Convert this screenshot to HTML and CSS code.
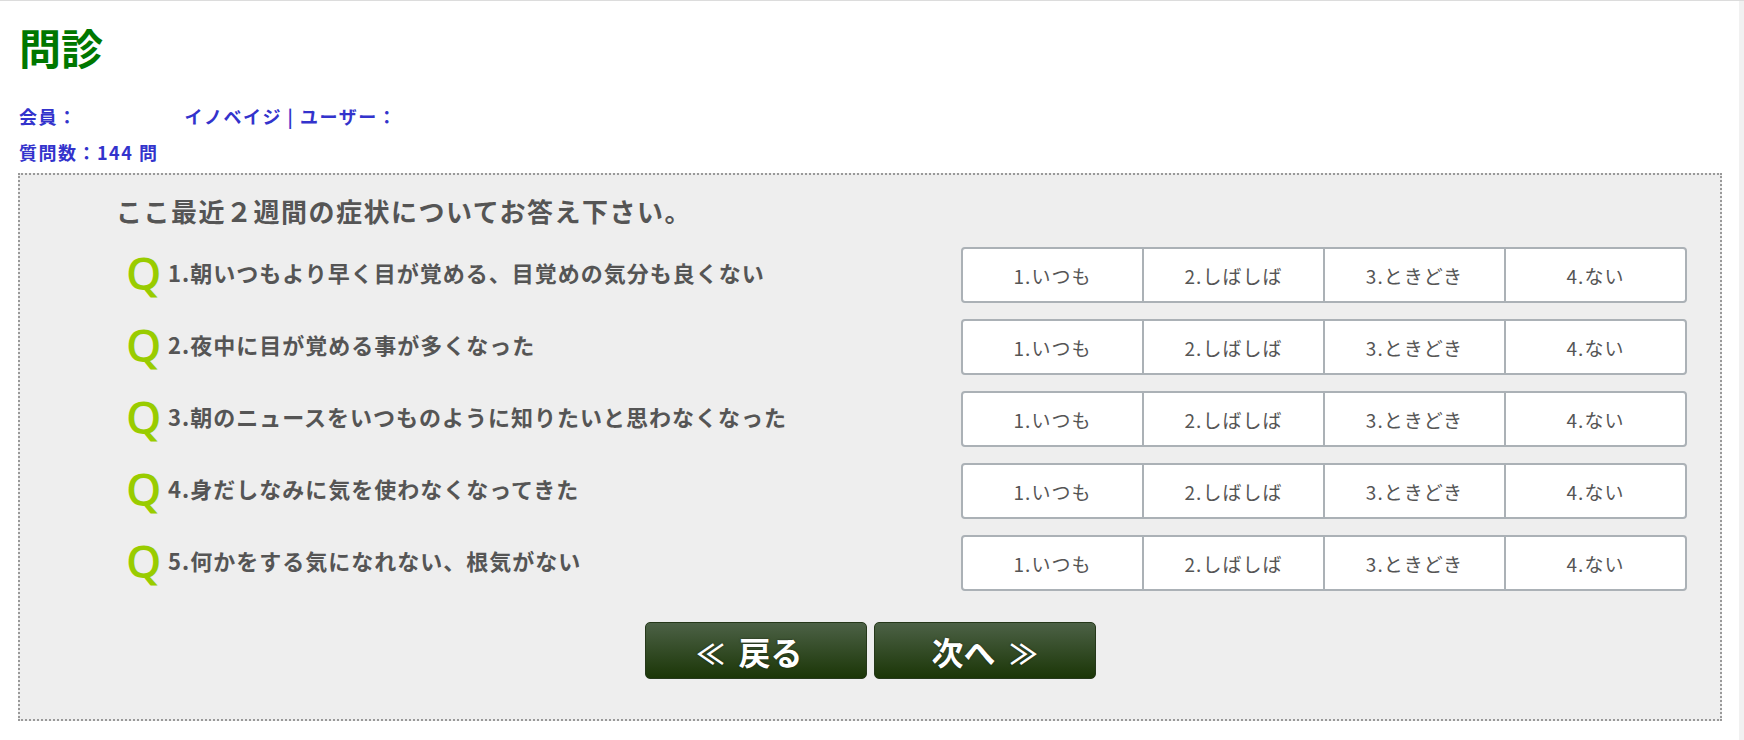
FILE: index.html
```html
<!DOCTYPE html>
<html lang="ja">
<head>
<meta charset="utf-8">
<title>問診</title>
<link rel="stylesheet" href="styles.css">
</head>
<body>
<div class="page">
  <h1 class="title">問診</h1>
  <p class="meta">会員：<span class="member">イノベイジ | ユーザー：</span></p>
  <p class="meta meta2">質問数：144 問</p>
  <div class="box">
    <h2 class="lead">ここ最近２週間の症状についてお答え下さい。</h2>
    <div class="rows">
      <div class="row">
        <div class="question"><span class="q">Q</span><span class="qtext">1.朝いつもより早く目が覚める、目覚めの気分も良くない</span></div>
        <div class="options"><span class="opt">1.いつも</span><span class="opt">2.しばしば</span><span class="opt">3.ときどき</span><span class="opt">4.ない</span></div>
      </div>
      <div class="row">
        <div class="question"><span class="q">Q</span><span class="qtext">2.夜中に目が覚める事が多くなった</span></div>
        <div class="options"><span class="opt">1.いつも</span><span class="opt">2.しばしば</span><span class="opt">3.ときどき</span><span class="opt">4.ない</span></div>
      </div>
      <div class="row">
        <div class="question"><span class="q">Q</span><span class="qtext">3.朝のニュースをいつものように知りたいと思わなくなった</span></div>
        <div class="options"><span class="opt">1.いつも</span><span class="opt">2.しばしば</span><span class="opt">3.ときどき</span><span class="opt">4.ない</span></div>
      </div>
      <div class="row">
        <div class="question"><span class="q">Q</span><span class="qtext">4.身だしなみに気を使わなくなってきた</span></div>
        <div class="options"><span class="opt">1.いつも</span><span class="opt">2.しばしば</span><span class="opt">3.ときどき</span><span class="opt">4.ない</span></div>
      </div>
      <div class="row">
        <div class="question"><span class="q">Q</span><span class="qtext">5.何かをする気になれない、根気がない</span></div>
        <div class="options"><span class="opt">1.いつも</span><span class="opt">2.しばしば</span><span class="opt">3.ときどき</span><span class="opt">4.ない</span></div>
      </div>
    </div>
    <div class="nav">
      <button class="btn btn-back" type="button"><span class="arr arr-l">≪</span>戻る</button>
      <button class="btn" type="button">次へ<span class="arr arr-r">≫</span></button>
    </div>
  </div>
</div>
<div class="scrollbar"></div>
</body>
</html>
```
FILE: styles.css
```css
html, body {
  margin: 0;
  padding: 0;
  height: 100%;
}
body {
  display: flex;
  border-top: 1px solid #dcdcdc;
  box-sizing: border-box;
  background: #ffffff;
  font-family: "Noto Sans CJK JP", "Noto Sans", sans-serif;
  color: #555555;
}
.page {
  flex: 1;
  padding: 0 17px 0 18px;
  min-width: 0;
}
.scrollbar {
  width: 5px;
  background: #f1f1f1;
  flex: none;
}
.title {
  margin: 21px 0 0 0;
  font-size: 42px;
  line-height: 50px;
  font-weight: bold;
  color: #007700;
  padding-left: 1px;
}
.meta {
  margin: 34px 0 0 0;
  padding-left: 1px;
  font-size: 18px;
  line-height: 20px;
  letter-spacing: 1.5px;
  font-weight: bold;
  color: #3333cc;
}
.meta2 {
  margin-top: 16px;
}
.member {
  margin-left: 107px;
}
.box {
  margin-top: 11px;
  border: 2px dotted #999999;
  background: #eeeeee;
  padding: 18px 33px 40px 96px;
}
.lead {
  margin: 0;
  font-size: 26px;
  line-height: 36px;
  letter-spacing: 1.5px;
  font-weight: bold;
  color: #555555;
}
.rows {
  margin-top: 18px;
  display: flex;
  flex-direction: column;
  gap: 16px;
  padding-left: 10px;
}
.row {
  display: flex;
  align-items: center;
  justify-content: space-between;
}
.question {
  display: flex;
  align-items: center;
  margin-top: -6px;
}
.q {
  font-family: "Open Sans", "DejaVu Sans", sans-serif;
  font-weight: 600;
  font-size: 45px;
  line-height: 46px;
  color: #99cc00;
  width: 42px;
  margin-top: 2px;
}
.qtext {
  font-size: 22px;
  line-height: 30px;
  letter-spacing: 1px;
  font-weight: bold;
  color: #555555;
}
.options {
  width: 726px;
  height: 56px;
  box-sizing: border-box;
  display: flex;
  border: 2px solid #abb1b6;
  border-radius: 4px;
  background: #ffffff;
}
.opt {
  flex: 1;
  display: flex;
  align-items: center;
  justify-content: center;
  font-size: 19px;
  letter-spacing: 1px;
  color: #555555;
}
.opt + .opt {
  border-left: 2px solid #abb1b6;
}
.nav {
  margin: 31px -33px 0 -96px;
  display: flex;
  justify-content: center;
  gap: 7px;
}
.btn {
  width: 222px;
  height: 57px;
  border: 1px solid #25381a;
  border-radius: 5px;
  background: linear-gradient(#4c6146, #1b3607);
  color: #ffffff;
  font-family: "Noto Sans CJK JP", sans-serif;
  font-weight: bold;
  font-size: 32px;
  line-height: 1;
  padding: 0;
  text-shadow: 0 0 2px rgba(0, 0, 0, 0.6);
}
.btn-back {
  padding-right: 12px;
}
.arr {
  font-size: 28px;
}
.arr-l {
  margin-right: 14px;
}
.arr-r {
  margin-left: 14px;
}
```
